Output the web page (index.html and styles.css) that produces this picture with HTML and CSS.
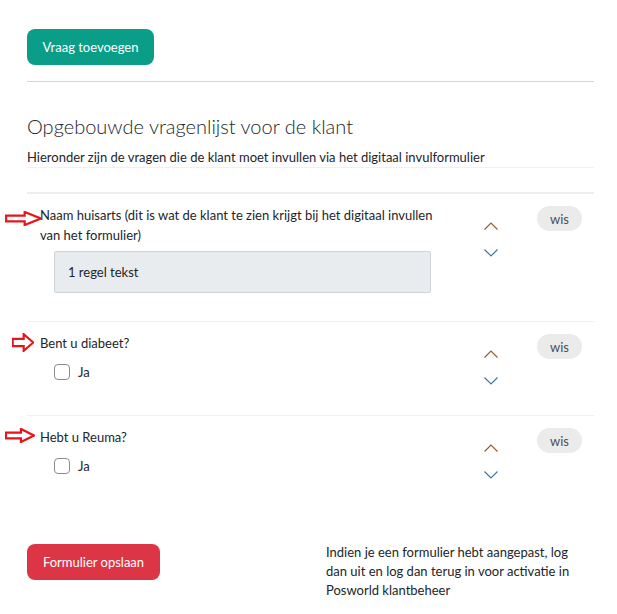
FILE: index.html
```html
<!DOCTYPE html>
<html lang="nl">
<head>
<meta charset="utf-8">
<title>Vragenlijst</title>
<link rel="stylesheet" href="styles.css">
</head>
<body>
<div class="page">
  <button class="btn btn-add">Vraag toevoegen</button>
  <hr class="sep">
  <h2 class="title">Opgebouwde vragenlijst voor de klant</h2>
  <p class="subtitle">Hieronder zijn de vragen die de klant moet invullen via het digitaal invulformulier</p>

  <div class="questions">
    <div class="q">
      <svg class="mark mark-1" viewBox="0 0 32 16" preserveAspectRatio="none"><polygon points="1,5 17,5 17,1 31,8 17,15 17,11 1,11" vector-effect="non-scaling-stroke"/></svg>
      <div class="q-body">
        <div class="q-label">Naam huisarts (dit is wat de klant te zien krijgt bij het digitaal invullen van het formulier)</div>
        <div class="q-input">1 regel tekst</div>
      </div>
      <div class="q-move">
        <svg class="chev chev-up" viewBox="0 0 14 8"><polyline points="0.5,7.5 7,1 13.5,7.5"/></svg>
        <svg class="chev chev-down" viewBox="0 0 14 8"><polyline points="0.5,0.5 7,7 13.5,0.5"/></svg>
      </div>
      <div class="q-actions"><button class="btn-wis">wis</button></div>
    </div>

    <div class="q">
      <svg class="mark mark-2" viewBox="0 0 32 16" preserveAspectRatio="none"><polygon points="1,5 17,5 17,1 31,8 17,15 17,11 1,11" vector-effect="non-scaling-stroke"/></svg>
      <div class="q-body">
        <div class="q-label">Bent u diabeet?</div>
        <label class="q-check"><input type="checkbox"><span>Ja</span></label>
      </div>
      <div class="q-move">
        <svg class="chev chev-up" viewBox="0 0 14 8"><polyline points="0.5,7.5 7,1 13.5,7.5"/></svg>
        <svg class="chev chev-down" viewBox="0 0 14 8"><polyline points="0.5,0.5 7,7 13.5,0.5"/></svg>
      </div>
      <div class="q-actions"><button class="btn-wis">wis</button></div>
    </div>

    <div class="q">
      <svg class="mark mark-3" viewBox="0 0 32 16" preserveAspectRatio="none"><polygon points="1,5 17,5 17,1 31,8 17,15 17,11 1,11" vector-effect="non-scaling-stroke"/></svg>
      <div class="q-body">
        <div class="q-label">Hebt u Reuma?</div>
        <label class="q-check"><input type="checkbox"><span>Ja</span></label>
      </div>
      <div class="q-move">
        <svg class="chev chev-up" viewBox="0 0 14 8"><polyline points="0.5,7.5 7,1 13.5,7.5"/></svg>
        <svg class="chev chev-down" viewBox="0 0 14 8"><polyline points="0.5,0.5 7,7 13.5,0.5"/></svg>
      </div>
      <div class="q-actions"><button class="btn-wis">wis</button></div>
    </div>
  </div>

  <div class="footer">
    <button class="btn btn-save">Formulier opslaan</button>
    <p class="note">Indien je een formulier hebt aangepast, log dan uit en log dan terug in voor activatie in Posworld klantbeheer</p>
  </div>
</div>
</body>
</html>
```

FILE: styles.css
```css
* { box-sizing: border-box; }

body {
  margin: 0;
  font-family: Lato, "Noto Sans", sans-serif;
  font-size: 13px;
  color: #212529;
  background: #fff;
}

.page {
  width: 617px;
  padding: 29px 23px 0 27px;
}

.btn {
  display: block;
  height: 36px;
  border: none;
  border-radius: 8px;
  color: #fff;
  font-family: Lato, "Noto Sans", sans-serif;
  font-size: 13px;
  font-weight: 400;
  cursor: pointer;
}

.btn-add {
  width: 127px;
  background: #0a9e88;
}

.btn-save {
  width: 133px;
  background: #dc3545;
}

.sep {
  margin: 16px 0 0;
  border: 0;
  border-top: 1px solid #d6d6d6;
  height: 0;
}

.title {
  margin: 32px 0 0;
  font-size: 20px;
  line-height: 24px;
  font-weight: 300;
}

.subtitle {
  margin: 9px 0 0;
  line-height: 20px;
  border-bottom: 1px solid #f0f0f0;
}

.questions {
  margin-top: 24px;
  border-top: 2px solid #ededed;
}

.q {
  position: relative;
  display: grid;
  grid-template-columns: 430px 42px 1fr;
  align-items: start;
  padding: 11px 0 28px 13px;
  border-bottom: 1px solid #efefef;
}

.q:last-child { border-bottom: none; }

.mark {
  position: absolute;
  fill: none;
  stroke: #e8141c;
  stroke-width: 2.2px;
  stroke-linejoin: miter;
}
.mark-1 { left: -22px; top: 17px; width: 37px; height: 15px; }
.mark-2 { left: -15px; top: 11px; width: 22px; height: 19px; }
.mark-3 { left: -22px; top: 12px; width: 30px; height: 15px; }

.q-label {
  max-width: 410px;
  line-height: 20px;
}

.q-input {
  margin: 6px 0 0 14px;
  width: 377px;
  height: 42px;
  line-height: 40px;
  padding-left: 13px;
  background: #e9ecef;
  border: 1px solid #ced4da;
  border-radius: 2px;
}

.q-check {
  display: flex;
  align-items: center;
  gap: 8px;
  margin: 9px 0 5px 14px;
  height: 20px;
}

.q-check input {
  appearance: none;
  -webkit-appearance: none;
  margin: 0;
  width: 16px;
  height: 16px;
  border: 1px solid #8c8c8c;
  border-radius: 4px;
  background: #fff;
}

.q-move {
  display: flex;
  flex-direction: column;
  align-items: center;
  gap: 19px;
  margin-top: 17px;
}

.chev {
  display: block;
  width: 14px;
  height: 8px;
  fill: none;
  stroke-width: 1.1px;
}
.chev-up { stroke: #95562c; }
.chev-down { stroke: #3a72ab; }

.q-actions { padding-left: 25px; margin-top: 1px; }

.btn-wis {
  width: 45px;
  height: 25px;
  border: none;
  border-radius: 13px;
  background: #ebebeb;
  color: #495057;
  font-family: Lato, "Noto Sans", sans-serif;
  font-size: 13px;
  padding: 0;
}

.footer {
  display: grid;
  grid-template-columns: 299px 255px;
  align-items: start;
  margin-top: 35px;
}

.note {
  margin: -1px 0 0;
  line-height: 19px;
}
```
